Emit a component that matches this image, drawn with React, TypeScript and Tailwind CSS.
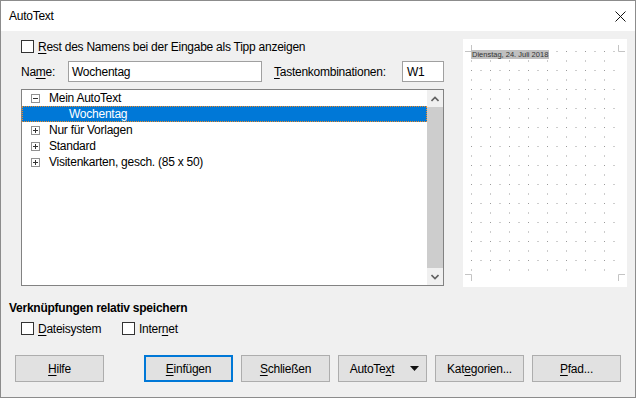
import { ReactNode } from 'react';

const font = { fontFamily: '"Liberation Sans", Arial, sans-serif' };

const Box = () => <div className="w-[13px] h-[13px] border border-[#333333] bg-white shrink-0" />;

const Btn = ({ children, primary }: { children: ReactNode; primary?: boolean }) => (
  <div
    className={
      'w-[89px] h-[27px] flex items-center justify-center bg-[#e1e1e1] text-[12px] text-black ' +
      (primary ? 'border-2 border-[#0078d7]' : 'border border-[#adadad]')
    }
  >
    {children}
  </div>
);

const Expander = ({ open }: { open?: boolean }) => (
  <svg width="9" height="9" viewBox="0 0 9 9" className="shrink-0">
    <rect x="0.5" y="0.5" width="8" height="8" fill="white" stroke="#919191" />
    <line x1="2" y1="4.5" x2="7" y2="4.5" stroke="#333" />
    {!open && <line x1="4.5" y1="2" x2="4.5" y2="7" stroke="#333" />}
  </svg>
);

const Preview = () => (
  <div className="relative ml-[19px] w-[164px] h-[248px] bg-white">
    <svg width="164" height="248" className="absolute inset-0">
      <defs>
        <pattern id="dots" x="8" y="12" width="19" height="19" patternUnits="userSpaceOnUse">
          <rect x="0" y="0" width="1" height="1" fill="#9a9a9a" />
          <rect x="9.5" y="0" width="1" height="1" fill="#9a9a9a" />
          <rect x="0" y="9.5" width="1" height="1" fill="#9a9a9a" />
        </pattern>
      </defs>
      <rect x="8" y="12" width="145" height="220" fill="url(#dots)" />
      <g stroke="#c4c4c4" strokeWidth="1" fill="none">
        <path d="M2 12.5 H8.5 V6" />
        <path d="M155.5 6 V12.5 H162" />
        <path d="M2 235.5 H8.5 V242" />
        <path d="M155.5 242 V235.5 H162" />
      </g>
    </svg>
    <div className="absolute left-[8px] top-[11px] h-[9px] px-[1px] bg-[#c0c0c0] text-[7.5px] leading-[9px] text-[#333] tracking-normal">
      Dienstag, 24. Juli 2018
    </div>
  </div>
);

const TreeRow = ({ label, open }: { label: string; open?: boolean }) => (
  <div className="h-[16px] flex items-center pl-[9px]">
    <Expander open={open} />
    <span className="ml-[9px]">{label}</span>
  </div>
);

const Chevron = ({ up }: { up?: boolean }) => (
  <svg width="8" height="6" viewBox="0 0 8 6">
    <path d={up ? 'M0.5 5 L4 1.5 L7.5 5' : 'M0.5 1 L4 4.5 L7.5 1'} stroke="#606060" strokeWidth="1.6" fill="none" />
  </svg>
);

export default function App() {
  return (
    <div className="w-[636px] h-[398px] border border-[#8c8c8c] bg-[#f0f0f0] flex flex-col text-[12px] text-black tracking-[-0.25px]" style={font}>
      <div className="h-[30px] bg-white flex items-center justify-between pl-[8px] pr-[9px] shrink-0">
        <span>AutoText</span>
        <svg width="11" height="11" viewBox="0 0 11 11">
          <path d="M0.5 0.5 L10.5 10.5 M10.5 0.5 L0.5 10.5" stroke="#111" strokeWidth="1" />
        </svg>
      </div>

      <div className="flex pt-[8px]">
        <div className="ml-[20px] w-[423px] flex flex-col">
          <div className="mt-[1px] h-[13px] flex items-center">
            <Box />
            <span className="ml-[4px]">
              <span className="underline underline-offset-2">R</span>est des Namens bei der Eingabe als Tipp anzeigen
            </span>
          </div>

          <div className="mt-[8px] h-[21px] flex items-center">
            <span className="w-[47px]">
              Na<span className="underline underline-offset-2">m</span>e:
            </span>
            <div className="w-[194px] h-[21px] border border-[#a0a0a0] bg-white flex items-center pl-[3px]">Wochentag</div>
            <span className="ml-[12px]">
              <span className="underline underline-offset-2">T</span>astenkombinationen:
            </span>
            <div className="ml-auto w-[42px] h-[21px] border border-[#a0a0a0] bg-white flex items-center pl-[4px]">W1</div>
          </div>

          <div className="mt-[7px] h-[197px] border border-[#828282] bg-white flex">
            <div className="flex-1 flex flex-col">
              <TreeRow label="Mein AutoText" open />
              <div className="h-[16px] bg-[#0078d7] text-white flex items-center pl-[47px] outline outline-1 outline-dotted outline-[#f08a24] -outline-offset-1">
                Wochentag
              </div>
              <TreeRow label="Nur für Vorlagen" />
              <TreeRow label="Standard" />
              <TreeRow label="Visitenkarten, gesch. (85 x 50)" />
            </div>
            <div className="w-[16px] bg-[#f0f0f0] flex flex-col">
              <div className="h-[17px] flex items-center justify-center">
                <Chevron up />
              </div>
              <div className="flex-1 bg-[#cdcdcd]" />
              <div className="h-[17px] flex items-center justify-center">
                <Chevron />
              </div>
            </div>
          </div>
        </div>

        <Preview />
      </div>

      <div className="mt-[13px] h-[16px] leading-[16px] pl-[8px] font-bold">Verknüpfungen relativ speichern</div>

      <div className="mt-[6px] h-[13px] pl-[20px] flex items-center">
        <Box />
        <span className="ml-[4px] w-[84px]">
          <span className="underline underline-offset-2">D</span>ateisystem
        </span>
        <Box />
        <span className="ml-[4px]">
          Inter<span className="underline underline-offset-2">n</span>et
        </span>
      </div>

      <div className="mt-[20px] pl-[14px] flex">
        <Btn>
          <span className="underline underline-offset-2">H</span>ilfe
        </Btn>
        <div className="ml-[40px] flex gap-[8px]">
          <Btn primary>
            <span className="underline underline-offset-2">E</span>infügen
          </Btn>
          <Btn>
            <span className="underline underline-offset-2">S</span>chließen
          </Btn>
          <Btn>
            <span className="ml-[4px]">
              AutoTe<span className="underline underline-offset-2">x</span>t
            </span>
            <svg width="9" height="5" viewBox="0 0 9 5" className="ml-[16px]">
              <path d="M0 0 H9 L4.5 5 Z" fill="#111" />
            </svg>
          </Btn>
          <Btn>
            Kat<span className="underline underline-offset-2">e</span>gorien...
          </Btn>
          <Btn>
            <span className="underline underline-offset-2">P</span>fad...
          </Btn>
        </div>
      </div>
    </div>
  );
}
